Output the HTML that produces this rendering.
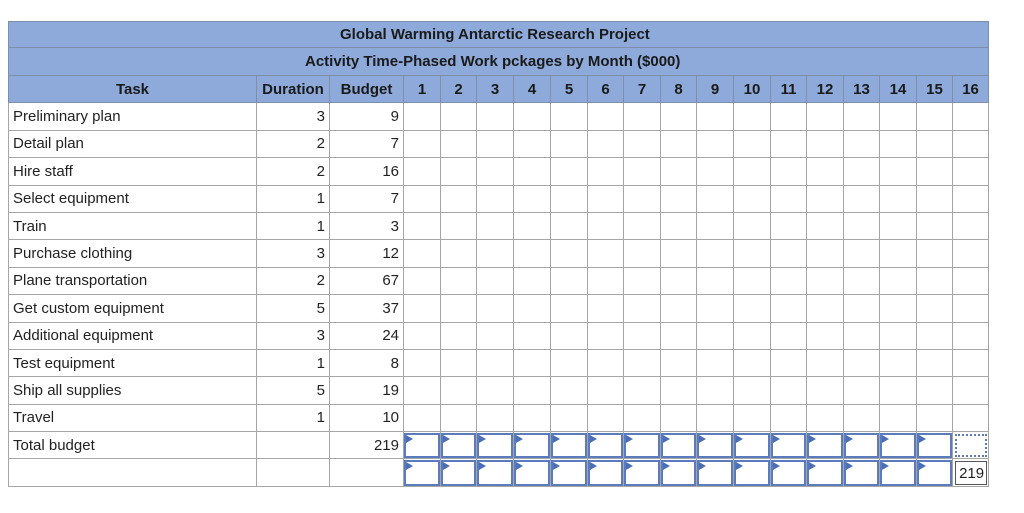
<!DOCTYPE html>
<html><head><style>
body{margin:0;background:#fff;font-family:"Liberation Sans",Arial,sans-serif;font-size:15px;color:#222}
table{position:absolute;left:8px;top:21px;border-collapse:collapse;table-layout:fixed;width:980px}
td{border:1px solid #a6a6a6;padding:0 4px;height:26.4px;white-space:nowrap;overflow:hidden}
tr.h td{background:#8eaadb;font-weight:bold;text-align:center;color:#1a1a1a;border-color:#7f8fa8}
td.n{text-align:right}
td.in{padding:0;position:relative}
td.in div{position:absolute;left:0;top:1px;right:0;bottom:0;border:2px solid #5b7bbf}
td.in div:before{content:"";position:absolute;left:0;top:0;border-left:7px solid #4a6fb8;border-top:4px solid transparent;border-bottom:4px solid transparent}
td.dot{position:relative;padding:0}
td.dot div{position:absolute;left:2px;top:2px;right:1px;bottom:1px;border:2px dotted #5b7bbf}
td.last{position:relative;padding:0}
td.last div{position:absolute;left:2px;top:2px;right:1px;bottom:1px;border:1px solid #555;text-align:right;line-height:24px;padding-right:2px}
</style></head><body>
<table>
<colgroup><col style="width:248px"><col style="width:73px"><col style="width:74px">
<col style="width:37px"><col style="width:36px"><col style="width:37px"><col style="width:37px"><col style="width:37px"><col style="width:36px"><col style="width:37px"><col style="width:36px"><col style="width:37px"><col style="width:37px"><col style="width:36px"><col style="width:37px"><col style="width:36px"><col style="width:37px"><col style="width:36px"><col style="width:36px"></colgroup>
<tr class="h"><td colspan="19" style="height:25px;text-align:left;padding-left:331px">Global Warming Antarctic Research Project</td></tr>
<tr class="h"><td colspan="19" style="height:27px;text-align:left;padding-left:296px">Activity Time-Phased Work pckages by Month ($000)</td></tr>
<tr class="h"><td>Task</td><td>Duration</td><td>Budget</td><td>1</td><td>2</td><td>3</td><td>4</td><td>5</td><td>6</td><td>7</td><td>8</td><td>9</td><td>10</td><td>11</td><td>12</td><td>13</td><td>14</td><td>15</td><td>16</td></tr>
<tr><td>Preliminary plan</td><td class="n">3</td><td class="n">9</td><td></td><td></td><td></td><td></td><td></td><td></td><td></td><td></td><td></td><td></td><td></td><td></td><td></td><td></td><td></td><td></td></tr>
<tr><td>Detail plan</td><td class="n">2</td><td class="n">7</td><td></td><td></td><td></td><td></td><td></td><td></td><td></td><td></td><td></td><td></td><td></td><td></td><td></td><td></td><td></td><td></td></tr>
<tr><td>Hire staff</td><td class="n">2</td><td class="n">16</td><td></td><td></td><td></td><td></td><td></td><td></td><td></td><td></td><td></td><td></td><td></td><td></td><td></td><td></td><td></td><td></td></tr>
<tr><td>Select equipment</td><td class="n">1</td><td class="n">7</td><td></td><td></td><td></td><td></td><td></td><td></td><td></td><td></td><td></td><td></td><td></td><td></td><td></td><td></td><td></td><td></td></tr>
<tr><td>Train</td><td class="n">1</td><td class="n">3</td><td></td><td></td><td></td><td></td><td></td><td></td><td></td><td></td><td></td><td></td><td></td><td></td><td></td><td></td><td></td><td></td></tr>
<tr><td>Purchase clothing</td><td class="n">3</td><td class="n">12</td><td></td><td></td><td></td><td></td><td></td><td></td><td></td><td></td><td></td><td></td><td></td><td></td><td></td><td></td><td></td><td></td></tr>
<tr><td>Plane transportation</td><td class="n">2</td><td class="n">67</td><td></td><td></td><td></td><td></td><td></td><td></td><td></td><td></td><td></td><td></td><td></td><td></td><td></td><td></td><td></td><td></td></tr>
<tr><td>Get custom equipment</td><td class="n">5</td><td class="n">37</td><td></td><td></td><td></td><td></td><td></td><td></td><td></td><td></td><td></td><td></td><td></td><td></td><td></td><td></td><td></td><td></td></tr>
<tr><td>Additional equipment</td><td class="n">3</td><td class="n">24</td><td></td><td></td><td></td><td></td><td></td><td></td><td></td><td></td><td></td><td></td><td></td><td></td><td></td><td></td><td></td><td></td></tr>
<tr><td>Test equipment</td><td class="n">1</td><td class="n">8</td><td></td><td></td><td></td><td></td><td></td><td></td><td></td><td></td><td></td><td></td><td></td><td></td><td></td><td></td><td></td><td></td></tr>
<tr><td>Ship all supplies</td><td class="n">5</td><td class="n">19</td><td></td><td></td><td></td><td></td><td></td><td></td><td></td><td></td><td></td><td></td><td></td><td></td><td></td><td></td><td></td><td></td></tr>
<tr><td>Travel</td><td class="n">1</td><td class="n">10</td><td></td><td></td><td></td><td></td><td></td><td></td><td></td><td></td><td></td><td></td><td></td><td></td><td></td><td></td><td></td><td></td></tr>
<tr><td>Total budget</td><td></td><td class="n">219</td>
<td class="in"><div></div></td><td class="in"><div></div></td><td class="in"><div></div></td><td class="in"><div></div></td><td class="in"><div></div></td><td class="in"><div></div></td><td class="in"><div></div></td><td class="in"><div></div></td><td class="in"><div></div></td><td class="in"><div></div></td><td class="in"><div></div></td><td class="in"><div></div></td><td class="in"><div></div></td><td class="in"><div></div></td><td class="in"><div></div></td><td class="dot"><div></div></td></tr>
<tr><td></td><td></td><td></td>
<td class="in"><div></div></td><td class="in"><div></div></td><td class="in"><div></div></td><td class="in"><div></div></td><td class="in"><div></div></td><td class="in"><div></div></td><td class="in"><div></div></td><td class="in"><div></div></td><td class="in"><div></div></td><td class="in"><div></div></td><td class="in"><div></div></td><td class="in"><div></div></td><td class="in"><div></div></td><td class="in"><div></div></td><td class="in"><div></div></td><td class="last"><div>219</div></td></tr>
</table>
</body></html>
